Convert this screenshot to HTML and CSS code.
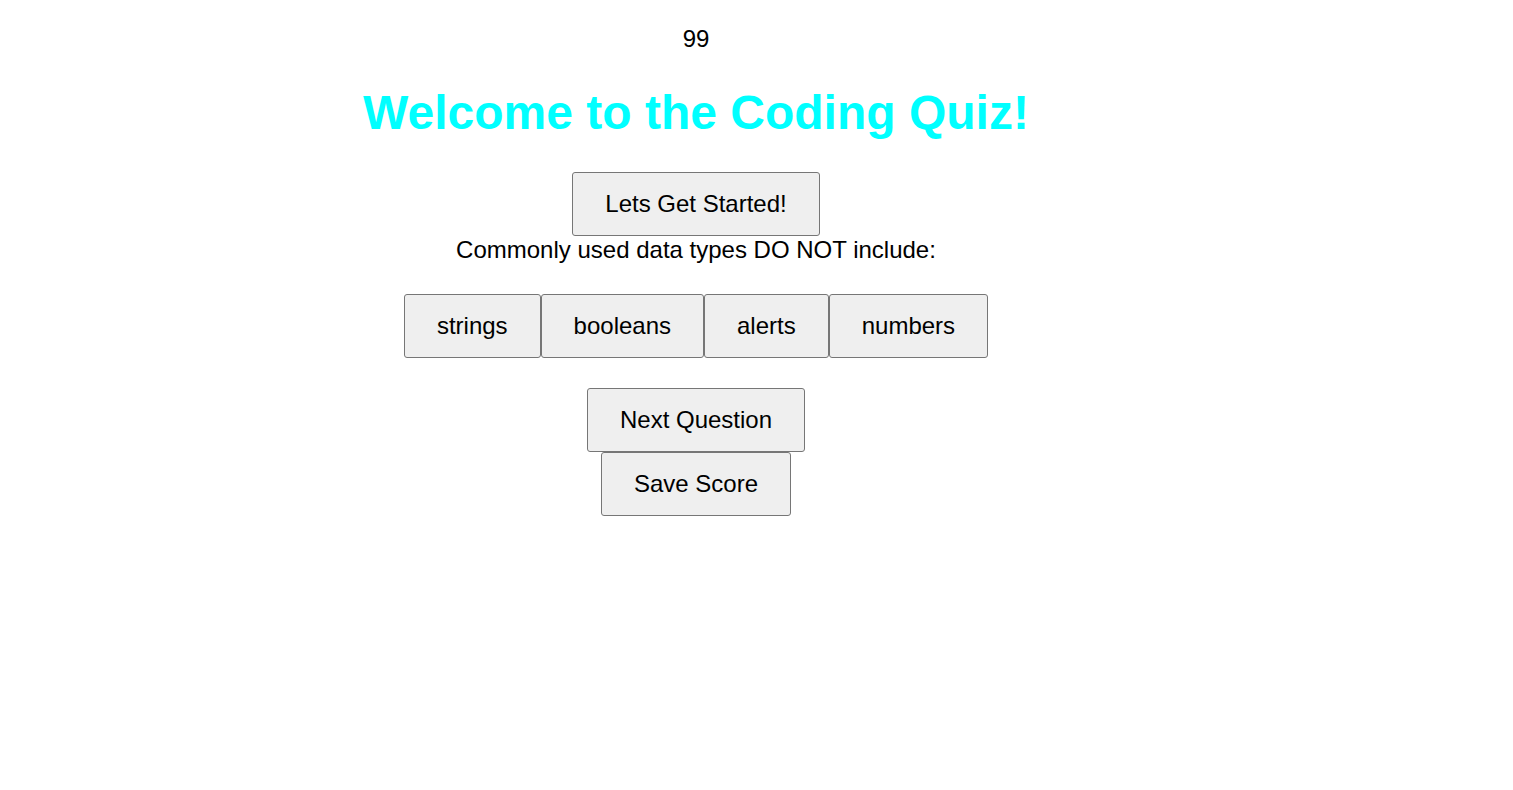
FILE: index.html
```html
<!DOCTYPE html>
<html>
<head>
<meta charset="utf-8">
<link rel="stylesheet" href="styles.css">
<title>Coding Quiz</title>
</head>
<body>
<main class="quiz">
  <div class="timer">99</div>
  <h1 class="title">Welcome to the Coding Quiz!</h1>
  <button class="btn">Lets Get Started!</button>
  <p class="question">Commonly used data types DO NOT include:</p>
  <div class="options">
    <button class="btn">strings</button>
    <button class="btn">booleans</button>
    <button class="btn">alerts</button>
    <button class="btn">numbers</button>
  </div>
  <button class="btn">Next Question</button>
  <button class="btn">Save Score</button>
</main>
</body>
</html>
```
FILE: styles.css
```css
body {
  margin: 8px;
  background: #fff;
  font-family: "Liberation Sans", Arial, sans-serif;
  color: #000;
}
.quiz {
  width: 1376px;
  display: flex;
  flex-direction: column;
  align-items: center;
  font-size: 24px;
}
.timer {
  margin-top: 17px;
  line-height: 28px;
}
.title {
  margin: 32px 0 32px;
  font-size: 48px;
  font-weight: bold;
  color: #00ffff;
  line-height: 55px;
}
.btn {
  font-family: "Liberation Sans", Arial, sans-serif;
  font-size: 24px;
  line-height: 28px;
  padding: 17px 32px;
  background: #efefef;
  border: 1px solid #767676;
  border-radius: 3px;
  color: #000;
  margin: 0;
}
.question {
  margin: 0;
  line-height: 28px;
}
.options {
  display: flex;
  margin: 30px 0 30px;
}
```
